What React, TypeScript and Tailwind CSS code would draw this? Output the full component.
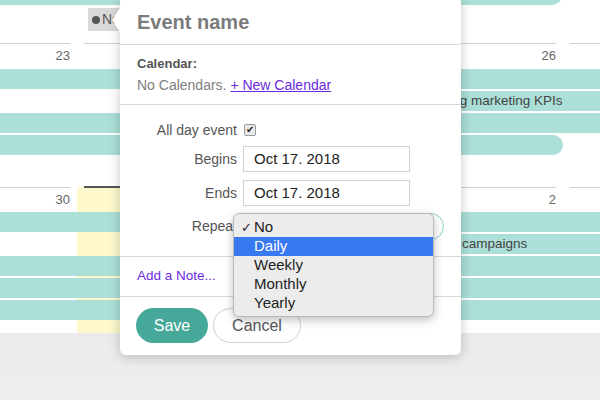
import React from 'react';

const font = { fontFamily: '"Liberation Sans", Arial, sans-serif' };

type Bar = { start?: number; text?: string; roundRight?: boolean };

interface WeekProps {
  numbers: string[];
  bars: Bar[];
  headerPad: string;
  height: string;
  today?: number;
}

// one calendar week: cell grid behind, event bars on top
const Week: React.FC<WeekProps> = ({ numbers, bars, headerPad, height, today }) => (
  <div className={`relative ${height}`}>
    <div className="absolute inset-y-0 left-[-85px] flex">
      {numbers.map((n, i) => (
        <div key={i} className={`w-[162px] h-full ${i === today ? 'bg-[#fdf9cc]' : ''}`}>
          <div
            className={`mx-[7px] pt-[4px] h-[21px] text-right text-[13px] leading-[16px] text-[#666] ${
              i === today ? 'border-t-2 border-[#555] -mt-px' : 'border-t border-[#d0d0d0]'
            }`}
          >
            {n}
          </div>
        </div>
      ))}
    </div>
    <div className={`relative flex flex-col gap-[2px] ${headerPad}`}>
      {bars.map((b, i) => (
        <div key={i} className="h-[20px] flex">
          <div
            className={`h-full flex items-center bg-[#abdfd7] text-[13.5px] text-[#444] pl-[4px] ${
              b.roundRight ? 'w-[563px] rounded-r-[10px]' : 'flex-1'
            } ${b.start ? 'ml-[401px] rounded-l-[10px]' : ''}`}
          >
            {b.text}
          </div>
        </div>
      ))}
    </div>
  </div>
);

const repeatOptions = ['No', 'Daily', 'Weekly', 'Monthly', 'Yearly'];

export default function App() {
  return (
    <div className="relative w-[600px] h-[400px] overflow-hidden flex flex-col bg-gradient-to-b from-[#dcdde0] to-[#eeeef0]" style={font}>
      {/* Calendar */}
      <div className="h-[333px] bg-white overflow-hidden shrink-0">
        <div className="h-[5px] flex items-end">
          <div className="w-[562px] h-[20px] bg-[#abdfd7] rounded-r-[10px]" />
        </div>
        <div className="h-[38px] pt-[3px]">
          <div className="ml-[88px] w-[40px] h-[23px] bg-[#d9d9d9] flex items-center pl-[4px] gap-[2px] text-[14px] text-[#555] overflow-hidden">
            <span className="shrink-0 w-[8px] h-[8px] rounded-full bg-[#555]" />
            <span>New</span>
          </div>
        </div>
        <Week
          numbers={['23', '24', '25', '26', '']}
          headerPad="pt-[26px]"
          height="h-[144px]"
          bars={[{}, { start: 401, text: 'Reviewing marketing KPIs' }, {}, { roundRight: true }]}
        />
        <Week
          numbers={['30', '31', '1', '2', '']}
          headerPad="pt-[25px]"
          height="h-[146px]"
          today={1}
          bars={[{}, { start: 401, text: 'Run new campaigns' }, {}, {}, {}]}
        />
      </div>

      {/* Popover */}
      <div className="absolute left-[120px] top-[-4px] w-[341px] bg-white rounded-[6px] shadow-[0_2px_12px_rgba(0,0,0,0.22)]">
        <div className="absolute left-[-8px] top-[12px] w-0 h-0 border-y-[12px] border-y-transparent border-r-[8px] border-r-white" />
        <div className="h-[49px] pt-[4px] pl-[17px] flex items-center border-b border-[#d5d5d5] text-[20px] font-bold text-[#7b7b7b]">
          Event name
        </div>
        <div className="pl-[17px] pt-[9px] pb-[9px] border-b border-[#d5d5d5] flex flex-col gap-[1px]">
          <div className="h-[20px] flex items-center text-[13px] font-bold text-[#555]">Calendar:</div>
          <div className="h-[20px] flex items-center text-[14px] text-[#808080]">
            No Calendars.&nbsp;<span className="text-[#6b2be0] underline">+ New Calendar</span>
          </div>
        </div>
        <div className="pt-[15px] pb-[16px] border-b border-[#d5d5d5] flex flex-col text-[14px] text-[#555]">
          <div className="h-[20px] flex items-center">
            <span className="w-[117px] text-right">All day event</span>
            <span className="ml-[7px] w-[12px] h-[12px] rounded-[2px] border border-[#999] bg-[#eaeaea] flex items-center justify-center text-[10px] leading-none text-[#222]">✔</span>
          </div>
          <div className="mt-[6px] flex items-center">
            <span className="w-[117px] text-right">Begins</span>
            <div className="ml-[6px] w-[167px] h-[26px] border border-[#d0d0d0] flex items-center pl-[10px] text-[15px] text-[#222]">Oct 17. 2018</div>
          </div>
          <div className="mt-[8px] flex items-center">
            <span className="w-[117px] text-right">Ends</span>
            <div className="ml-[6px] w-[167px] h-[26px] border border-[#d0d0d0] flex items-center pl-[10px] text-[15px] text-[#222]">Oct 17. 2018</div>
          </div>
          <div className="mt-[7px] flex items-center">
            <span className="w-[117px] text-right">Repeat</span>
            <div className="ml-[6px] w-[201px] h-[27px] border border-[#86d2c6] rounded-[14px]" />
          </div>
        </div>
        <div className="h-[40px] pl-[17px] flex items-center border-b border-[#d5d5d5] text-[13.5px] text-[#6d2ce0]">
          Add a Note...
        </div>
        <div className="pl-[16px] pt-[11px] pb-[12px] flex gap-[5px] text-[16px]">
          <button className="w-[72px] h-[35px] rounded-full bg-[#46a899] text-white">Save</button>
          <button className="w-[88px] h-[35px] rounded-full border border-[#cfcfcf] bg-white text-[#555]">Cancel</button>
        </div>

        {/* Repeat dropdown menu */}
        <div className="absolute left-[113px] top-[217px] w-[201px] pt-[4px] pb-[3px] bg-[#ececec] border border-[#b9b9b9] rounded-[6px] shadow-[0_3px_10px_rgba(0,0,0,0.25)]">
          {repeatOptions.map((o, i) => (
            <div
              key={o}
              className={`relative h-[19px] flex items-center pl-[20px] text-[15px] ${
                i === 1 ? 'bg-[#3878f0] text-white' : 'text-[#222]'
              }`}
            >
              {i === 0 && <span className="absolute left-[7px] text-[13px]">✓</span>}
              {o}
            </div>
          ))}
        </div>
      </div>
    </div>
  );
}
